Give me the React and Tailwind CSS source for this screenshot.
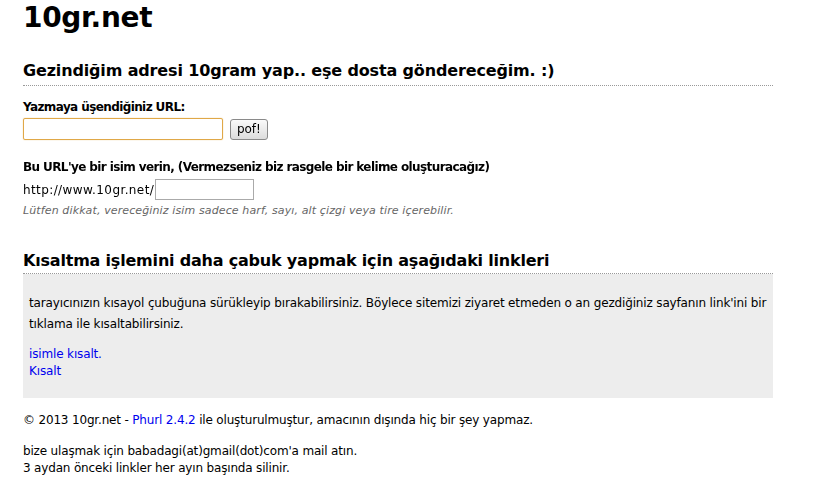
import React from 'react';

const body = { fontFamily: '"DejaVu Sans", Verdana, sans-serif' };

function App() {
  return (
    <div className="min-h-screen bg-white text-black" style={body}>
      <div className="w-[750px] ml-[23px] pt-[2px]">
        {/* Logo */}
        <h1 className="text-[28px] font-bold leading-[32px] tracking-[-0.3px]">10gr.net</h1>

        {/* Form */}
        <h2 className="mt-[26px] text-[16px] font-bold leading-[22px] tracking-[-0.15px] pb-[3px] border-b border-dotted border-[#999]">
          Gezindiğim adresi 10gram yap.. eşe dosta göndereceğim. :)
        </h2>

        <div className="mt-[13px] text-[12px] font-bold leading-[16px] tracking-[-0.6px]">Yazmaya üşendiğiniz URL:</div>
        <div className="mt-[3px] flex items-center gap-[7px]">
          <input
            autoFocus
            className="w-[200px] h-[22px] border border-[#e0a848] rounded-[2px] px-[2px] text-[12px] outline-none shadow-[0_0_1px_#e0a848]"
          />
          <button className="h-[21px] px-[6px] border border-[#8a8a8a] rounded-[3px] bg-gradient-to-b from-[#fafafa] to-[#dcdcdc] text-[12px] leading-[18px] tracking-[-0.1px]">
            pof!
          </button>
        </div>

        <div className="mt-[19px] text-[12px] font-bold leading-[16px] tracking-[-0.6px]">
          Bu URL'ye bir isim verin, (Vermezseniz biz rasgele bir kelime oluşturacağız)
        </div>
        <div className="mt-[4px] flex items-center text-[12px] tracking-[0.4px]">
          <span>http://www.10gr.net/</span>
          <input className="ml-[1px] w-[99px] h-[21px] border border-[#aaa] px-[2px] text-[12px] outline-none" />
        </div>
        <div className="mt-[3px] text-[11px] italic text-[#666] leading-[15px] tracking-[0.12px]">
          Lütfen dikkat, vereceğiniz isim sadece harf, sayı, alt çizgi veya tire içerebilir.
        </div>

        {/* Bookmarklets */}
        <h2 className="mt-[32px] text-[16px] font-bold leading-[22px] tracking-[-0.2px] pb-[1px] border-b border-dotted border-[#999]">
          Kısaltma işlemini daha çabuk yapmak için aşağıdaki linkleri
        </h2>
        <div className="bg-[#ededed] px-[6px] pt-[19px] pb-[18px] text-[12px] tracking-[-0.15px]">
          <p className="leading-[21px]">
            tarayıcınızın kısayol çubuğuna sürükleyip bırakabilirsiniz. Böylece sitemizi ziyaret etmeden o an gezdiğiniz sayfanın link'ini bir tıklama ile kısaltabilirsiniz.
          </p>
          <div className="mt-[11px] leading-[17px]">
            <a href="#" className="block text-[#0000ee]">isimle kısalt.</a>
            <a href="#" className="block text-[#0000ee]">Kısalt</a>
          </div>
        </div>

        {/* Footer */}
        <div className="mt-[14px] text-[12px] leading-[17px] tracking-[-0.17px]">
          <p>
            © 2013 10gr.net - <a href="#" className="text-[#0000ee]">Phurl 2.4.2</a> ile oluşturulmuştur, amacının dışında hiç bir şey yapmaz.
          </p>
          <p className="mt-[14px]">
            bize ulaşmak için babadagi(at)gmail(dot)com'a mail atın.
            <br />
            3 aydan önceki linkler her ayın başında silinir.
          </p>
        </div>
      </div>
    </div>
  );
}

export default App;
